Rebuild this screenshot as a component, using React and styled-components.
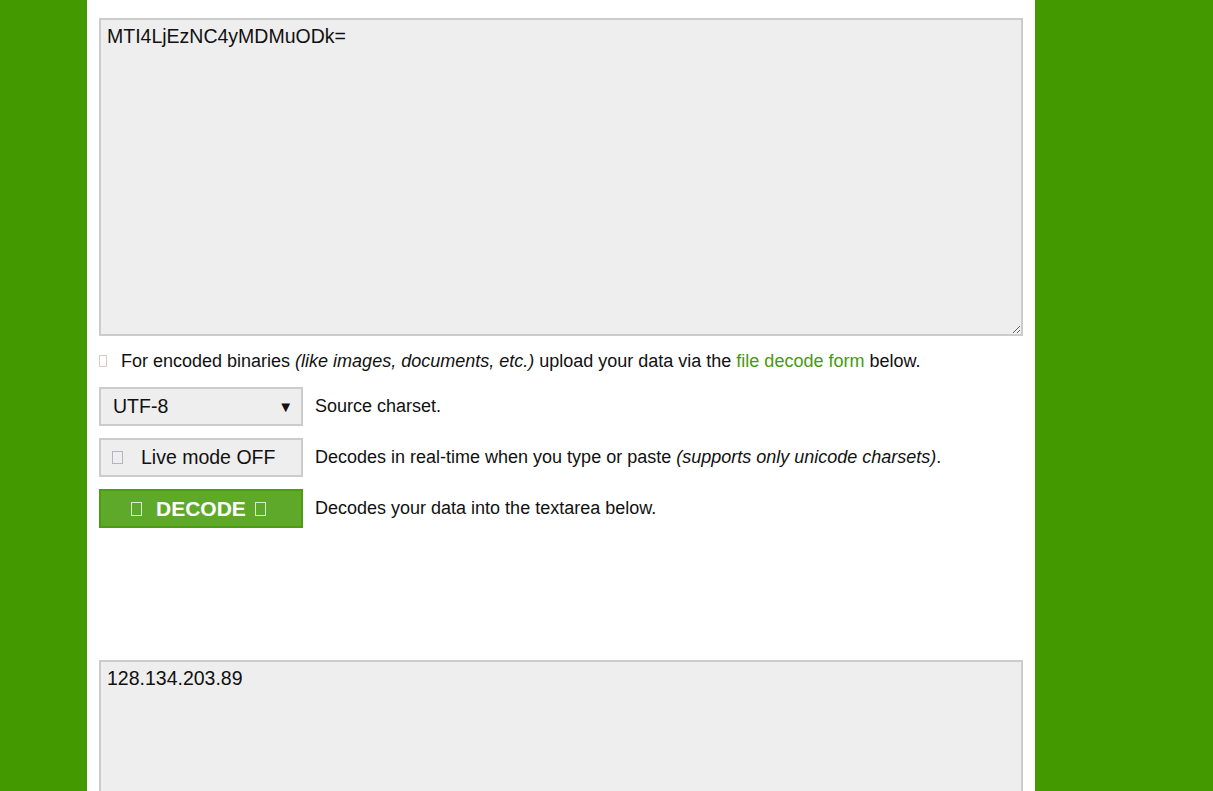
import React from 'react'
import styled, { createGlobalStyle } from 'styled-components';

const GlobalStyle = createGlobalStyle`
  html, body {
    margin: 0;
    padding: 0;
    background: #439a00;
    font-family: "Liberation Sans", Arial, sans-serif;
    color: #111;
  }
`;

const App = () => {
  return (
    <>
      <GlobalStyle />
      <Page>
        <Content>
          <Area defaultValue='MTI4LjEzNC4yMDMuODk=' height={318} />
          <CheckRow>
            <Tofu $color='#e0c8c8' $w={8} $h={12} />
            <span>
              For encoded binaries <i>(like images, documents, etc.)</i> upload your data via the{' '}
              <Link href='#'>file decode form</Link> below.
            </span>
          </CheckRow>
          <Row $top={16}>
            <Select>
              <span>UTF-8</span>
              <Arrow>▼</Arrow>
            </Select>
            <Label>Source charset.</Label>
          </Row>
          <Row>
            <GrayButton>
              <Tofu $color='#b4b4c4' $w={11} $h={13} />
              Live mode OFF
            </GrayButton>
            <Label>
              Decodes in real-time when you type or paste <i>(supports only unicode charsets)</i>.
            </Label>
          </Row>
          <Row>
            <DecodeButton>
              <Tofu $color='#d8ebc4' $w={11} $h={14} />
              <DecodeText>DECODE</DecodeText>
              <Tofu $color='#d8ebc4' $w={11} $h={14} />
            </DecodeButton>
            <Label>Decodes your data into the textarea below.</Label>
          </Row>
          <Spacer />
          <Area defaultValue='128.134.203.89' height={200} />
        </Content>
      </Page>
    </>
  )
}

export default App

const Page = styled.div`
  display: flex;
  height: 791px;
  overflow: hidden;
`;

const Content = styled.div`
  width: 948px;
  margin-left: 87px;
  background: #fff;
  padding: 18px 12px 0;
  box-sizing: border-box;
  display: flex;
  flex-direction: column;
`;

const Area = styled.textarea`
  display: block;
  width: 924px;
  height: ${p => p.height}px;
  flex-shrink: 0;
  box-sizing: border-box;
  background: #eee;
  border: 2px solid #ccc;
  padding: 5px 6px;
  font-family: "Liberation Sans", Arial, sans-serif;
  font-size: 19.5px;
  color: #111;
  resize: vertical;
  outline: none;
`;

const CheckRow = styled.label`
  display: flex;
  align-items: center;
  gap: 14px;
  margin-top: 15px;
  font-size: 18px;
  line-height: 20px;
`;

const Tofu = styled.span`
  display: inline-block;
  width: ${p => p.$w - 2}px;
  height: ${p => p.$h - 2}px;
  border: 1px solid ${p => p.$color};
  flex-shrink: 0;
`;

const Link = styled.a`
  color: #459a12;
  text-decoration: none;
`;

const Row = styled.div`
  display: flex;
  align-items: center;
  gap: 12px;
  margin-top: ${p => p.$top || 12}px;
`;

const Select = styled.div`
  width: 204px;
  height: 39px;
  box-sizing: border-box;
  background: #eee;
  border: 2px solid #ccc;
  display: flex;
  align-items: center;
  justify-content: space-between;
  padding: 0 8px 0 12px;
  font-size: 19.5px;
`;

const Arrow = styled.span`
  font-size: 15px;
`;

const GrayButton = styled.button`
  width: 204px;
  height: 39px;
  box-sizing: border-box;
  background: #eee;
  border: 2px solid #ccc;
  display: flex;
  align-items: center;
  gap: 18px;
  padding: 0 0 0 11px;
  font-family: "Liberation Sans", Arial, sans-serif;
  font-size: 19.5px;
  color: #111;
  cursor: pointer;
`;

const DecodeButton = styled.button`
  width: 204px;
  height: 39px;
  box-sizing: border-box;
  background: #5ea82a;
  border: 2px solid #489e10;
  display: flex;
  align-items: center;
  padding: 0 0 0 30px;
  font-family: "Liberation Sans", Arial, sans-serif;
  font-weight: bold;
  font-size: 21px;
  color: #fff;
  cursor: pointer;
`;

const DecodeText = styled.span`
  margin: 0 9px 0 14px;
`;

const Label = styled.span`
  font-size: 18px;
`;

const Spacer = styled.div`
  height: 132px;
  flex-shrink: 0;
`;
